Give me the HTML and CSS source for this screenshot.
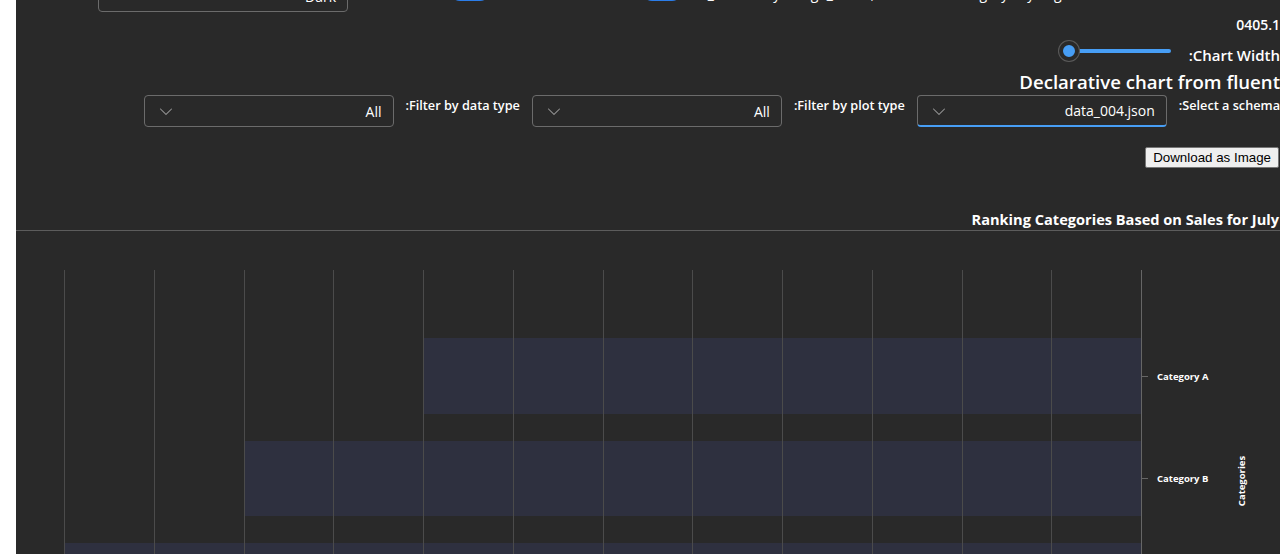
FILE: index.html
```html
<!DOCTYPE html>
<html lang="en">
<head>
<meta charset="utf-8">
<title>Declarative chart</title>
<link rel="stylesheet" href="styles.css">
</head>
<body>
<div class="page">
  <div class="toprow">
    <div class="toptext">E_Render by design_mode, Use stored category key flag</div>
    <div class="switch sw2"></div>
    <div class="switch sw1"></div>
    <div class="dropdown top-dd">
      <span class="dd-value">Dark</span>
      <svg class="chev" width="20" height="20" viewBox="0 0 20 20"><path d="M15.85 7.65a.5.5 0 0 1 0 .7l-5.5 5.5a.5.5 0 0 1-.7 0l-5.5-5.5a.5.5 0 1 1 .7-.7L10 12.79l5.15-5.14a.5.5 0 0 1 .7 0Z" fill="currentColor"/></svg>
    </div>
  </div>
  <div class="version">0405.1</div>
  <div class="width-row">
    <span class="lbl-strong">Chart Width:</span>
    <div class="slider"><div class="rail"></div><div class="thumb"></div></div>
  </div>
  <h1 class="heading">Declarative chart from fluent</h1>
  <div class="filters">
    <span class="lbl">Select a schema:</span>
    <div class="dropdown focused">
      <span class="dd-value">data_004.json</span>
      <svg class="chev" width="20" height="20" viewBox="0 0 20 20"><path d="M15.85 7.65a.5.5 0 0 1 0 .7l-5.5 5.5a.5.5 0 0 1-.7 0l-5.5-5.5a.5.5 0 1 1 .7-.7L10 12.79l5.15-5.14a.5.5 0 0 1 .7 0Z" fill="currentColor"/></svg>
    </div>
    <span class="lbl">Filter by plot type:</span>
    <div class="dropdown">
      <span class="dd-value">All</span>
      <svg class="chev" width="20" height="20" viewBox="0 0 20 20"><path d="M15.85 7.65a.5.5 0 0 1 0 .7l-5.5 5.5a.5.5 0 0 1-.7 0l-5.5-5.5a.5.5 0 1 1 .7-.7L10 12.79l5.15-5.14a.5.5 0 0 1 .7 0Z" fill="currentColor"/></svg>
    </div>
    <span class="lbl">Filter by data type:</span>
    <div class="dropdown">
      <span class="dd-value">All</span>
      <svg class="chev" width="20" height="20" viewBox="0 0 20 20"><path d="M15.85 7.65a.5.5 0 0 1 0 .7l-5.5 5.5a.5.5 0 0 1-.7 0l-5.5-5.5a.5.5 0 1 1 .7-.7L10 12.79l5.15-5.14a.5.5 0 0 1 .7 0Z" fill="currentColor"/></svg>
    </div>
  </div>
  <div class="btn-row"><button class="dl-btn" type="button">Download as Image</button></div>
  <div class="chart-title">Ranking Categories Based on Sales for July</div>
  <div class="divider"></div>
  <svg class="chart" width="1264" height="330" viewBox="0 0 1264 330">
    <g fill="#2e303f">
      <rect x="408" y="107" width="717" height="76"/>
      <rect x="228" y="210" width="897" height="75"/>
      <rect x="48" y="312" width="1077" height="80"/>
    </g>
    <g stroke="#4b4b4b" stroke-width="1">
      <line x1="48.5" y1="39" x2="48.5" y2="330"/>
      <line x1="138.5" y1="39" x2="138.5" y2="330"/>
      <line x1="228.5" y1="39" x2="228.5" y2="330"/>
      <line x1="317.5" y1="39" x2="317.5" y2="330"/>
      <line x1="407.5" y1="39" x2="407.5" y2="330"/>
      <line x1="497.5" y1="39" x2="497.5" y2="330"/>
      <line x1="587.5" y1="39" x2="587.5" y2="330"/>
      <line x1="676.5" y1="39" x2="676.5" y2="330"/>
      <line x1="766.5" y1="39" x2="766.5" y2="330"/>
      <line x1="856.5" y1="39" x2="856.5" y2="330"/>
      <line x1="946.5" y1="39" x2="946.5" y2="330"/>
      <line x1="1035.5" y1="39" x2="1035.5" y2="330"/>
    </g>
    <g stroke="#666" stroke-width="1">
      <line x1="1125.5" y1="39" x2="1125.5" y2="330"/>
      <line x1="1125" y1="145.5" x2="1132" y2="145.5"/>
      <line x1="1125" y1="247.5" x2="1132" y2="247.5"/>
    </g>
    <g class="tick-lbl" fill="#ffffff">
      <text x="1141" y="148.5">Category A</text>
      <text x="1141" y="250.5">Category B</text>
      <text transform="translate(1229 250) rotate(-90)" text-anchor="middle">Categories</text>
    </g>
  </svg>
</div>
</body>
</html>
```
FILE: styles.css
```css
html, body {
  margin: 0;
  padding: 0;
  background: #ffffff;
  overflow: hidden;
}
.page {
  margin-left: 16px;
  height: 554px;
  background: #292929;
  color: #ffffff;
  direction: rtl;
  font-family: "Open Sans", "Noto Sans", sans-serif;
  font-size: 14px;
  overflow: hidden;
}
.toprow {
  display: flex;
  align-items: flex-start;
  height: 32px;
  margin-top: -20px;
  padding-right: 25px;
}
.toptext {
  direction: ltr;
  width: 555px;
  line-height: 20px;
  margin-top: 4px;
  white-space: nowrap;
  overflow: hidden;
}
.switch {
  width: 40px;
  height: 20px;
  box-sizing: border-box;
  border-radius: 10px;
  background: #2b7de9;
  margin-top: 1px;
}
.sw2 { margin-right: 18px; }
.sw1 { margin-right: 152px; }
.dropdown {
  display: flex;
  align-items: center;
  justify-content: space-between;
  width: 250px;
  height: 32px;
  box-sizing: border-box;
  border: 1px solid #6b6b6b;
  border-radius: 4px;
  padding: 0 11px 0 11px;
  background: #292929;
  flex-shrink: 0;
}
.top-dd { margin-right: 102px; }
.dd-value {
  font-size: 14px;
  color: #ffffff;
  white-space: nowrap;
}
.chev {
  color: #9a9a9a;
  width: 20px;
  height: 20px;
  margin-left: 0;
}
.focused {
  border-bottom: 2px solid #479ef5;
}
.version {
  text-align: right;
  font-weight: 600;
  line-height: 20px;
  margin-top: 3px;
}
.width-row {
  display: flex;
  align-items: flex-start;
  height: 28px;
  margin-top: 7px;
}
.lbl-strong {
  font-size: 15px;
  font-weight: 600;
  line-height: 20px;
  margin-top: 3px;
  white-space: nowrap;
}
.slider {
  position: relative;
  width: 112px;
  height: 20px;
  margin-right: 18px;
  margin-top: -1px;
}
.rail {
  position: absolute;
  right: 0;
  left: 9px;
  top: 8px;
  height: 4px;
  border-radius: 2px;
  background: #479ef5;
}
.thumb {
  position: absolute;
  left: 0;
  top: 0;
  width: 20px;
  height: 20px;
  box-sizing: border-box;
  border-radius: 50%;
  background: #479ef5;
  border: 4px solid #292929;
  box-shadow: 0 0 0 1px #5a5a5a;
}
.heading {
  margin: 0;
  font-size: 18.6px;
  font-weight: 600;
  line-height: 24px;
  white-space: nowrap;
}
.filters {
  display: flex;
  align-items: flex-start;
  gap: 12px;
  margin-top: 1px;
}
.lbl {
  font-size: 12.7px;
  font-weight: 600;
  line-height: 20px;
  white-space: nowrap;
}
.btn-row {
  display: flex;
  margin-top: 20px;
  padding-right: 1px;
}
.dl-btn {
  font-family: "Liberation Sans", Arial, sans-serif;
  font-size: 13.333px;
  color: #000000;
  background: #efefef;
  border: 1px solid #767676;
  border-radius: 2px;
  height: 21px;
  padding: 0 7px 0 7px;
  line-height: 17px;
}
.chart-title {
  margin-top: 41px;
  padding-right: 1px;
  font-size: 14.6px;
  font-weight: 700;
  line-height: 21px;
  white-space: nowrap;
}
.divider {
  height: 1px;
  margin-left: -16px;
  background: #5c5c5c;
}
.chart {
  display: block;
  direction: ltr;
}
.tick-lbl {
  font-family: "Open Sans", sans-serif;
  font-size: 9.5px;
  font-weight: 700;
}
```
